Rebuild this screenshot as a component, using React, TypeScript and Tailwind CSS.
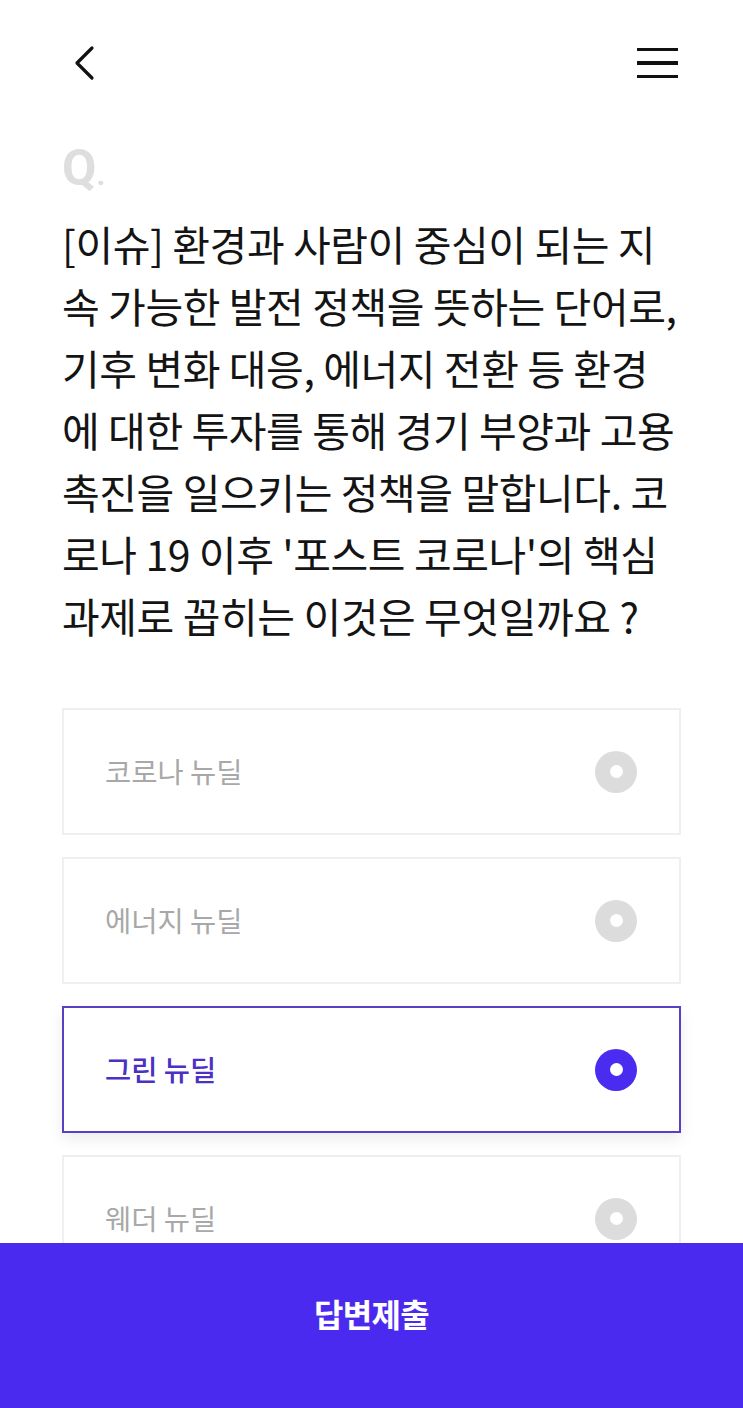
import { useState } from 'react'

const lines = [
  '[이슈] 환경과 사람이 중심이 되는 지',
  '속 가능한 발전 정책을 뜻하는 단어로,',
  '기후 변화 대응, 에너지 전환 등 환경',
  '에 대한 투자를 통해 경기 부양과 고용',
  '촉진을 일으키는 정책을 말합니다. 코',
  "로나 19 이후 '포스트 코로나'의 핵심",
  '과제로 꼽히는 이것은 무엇일까요 ?',
]

const options = ['코로나 뉴딜', '에너지 뉴딜', '그린 뉴딜', '웨더 뉴딜']

const font = { fontFamily: '"Noto Sans CJK KR", "Noto Sans", sans-serif' }

export default function App() {
  const [selected, setSelected] = useState(2)

  return (
    <div className="relative min-h-[1408px] bg-white text-[#111]" style={font}>
      {/* header */}
      <header className="flex items-center justify-between px-[62px] pt-[44px]">
        <button className="flex h-[38px] w-[44px] items-center pl-[10px]">
          <svg width="24" height="36" viewBox="0 0 24 36" fill="none">
            <path d="M20 3 L5 18 L20 33" stroke="#111" strokeWidth="3.2" strokeLinecap="round" strokeLinejoin="round" />
          </svg>
        </button>
        <button className="flex h-[38px] w-[44px] flex-col items-end justify-center gap-[10px] pr-[3px]">
          <span className="block h-[3.5px] w-[41px] bg-[#111]" />
          <span className="block h-[3.5px] w-[41px] bg-[#111]" />
          <span className="block h-[3.5px] w-[41px] bg-[#111]" />
        </button>
      </header>

      <main className="px-[62px] pb-[100px]">
        <div
          className="mt-[61px] text-[50px] font-bold leading-[50px] text-[#dedede]"
          style={{ fontFamily: 'Roboto, "Liberation Sans", sans-serif' }}
        >
          Q<span className="text-[30px]">.</span>
        </div>

        <div className="mt-[12px]">
          {lines.map((l) => (
            <p key={l} className="whitespace-nowrap text-[41px] leading-[62px] tracking-[-0.01em] text-[#141414]">
              {l}
            </p>
          ))}
        </div>

        <div className="mt-[62px] flex flex-col gap-[22px]">
          {options.map((o, i) => {
            const on = i === selected
            return (
              <button
                key={o}
                onClick={() => setSelected(i)}
                className={
                  on
                    ? 'flex h-[127px] items-center justify-between border-2 border-[#5a3fc2] bg-white pl-[41px] pr-[42px] shadow-[0_6px_14px_rgba(0,0,0,0.08)]'
                    : 'flex h-[127px] items-center justify-between border-2 border-[#efefef] bg-white pl-[41px] pr-[42px]'
                }
              >
                <span
                  className={
                    on
                      ? 'text-[28.5px] font-medium text-[#4b30c4]'
                      : 'text-[28.5px] text-[#a8a8a8]'
                  }
                >
                  {o}
                </span>
                <span
                  className={
                    on
                      ? 'flex h-[42px] w-[42px] items-center justify-center rounded-full bg-[#4a2cf0]'
                      : 'flex h-[42px] w-[42px] items-center justify-center rounded-full bg-[#dcdcdc]'
                  }
                >
                  <span className="block h-[13px] w-[13px] rounded-full bg-white" />
                </span>
              </button>
            )
          })}
        </div>
      </main>

      {/* submit bar */}
      <button className="fixed bottom-0 left-0 right-0 flex h-[165px] justify-center bg-[#4b2af0] pt-[50px]">
        <span className="text-[32px] font-bold leading-[40px] tracking-[-0.02em] text-white">답변제출</span>
      </button>
    </div>
  )
}
